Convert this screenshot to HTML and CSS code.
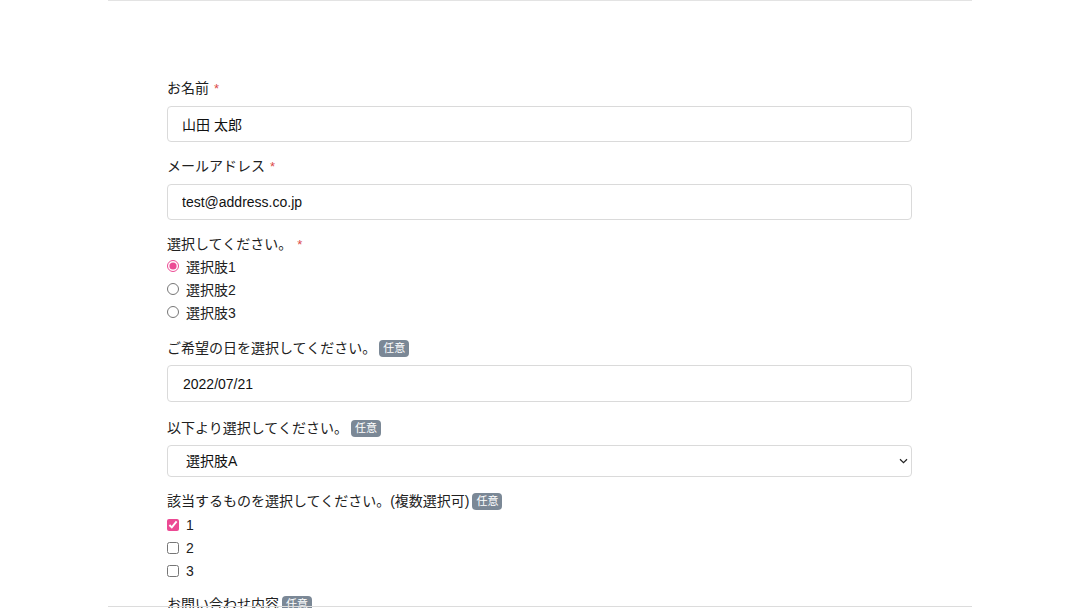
FILE: index.html
```html
<!DOCTYPE html>
<html lang="ja">

<head>
    <meta charset="UTF-8">
    <meta name="viewport" content="width=device-width, initial-scale=1.0">
    <title>お問い合わせ</title>
    <link rel="stylesheet" href="styles.css">
</head>

<body>
    <!-- フォーム本体 -->
    <div class="page">
        <form class="contact-form">
            <div class="field">
                <label class="field-label">お名前<span class="required">*</span></label>
                <input class="text-input" type="text" value="山田 太郎">
            </div>

            <div class="field">
                <label class="field-label">メールアドレス<span class="required">*</span></label>
                <input class="text-input" type="text" value="test@address.co.jp">
            </div>

            <div class="field field-choices field-radio">
                <label class="field-label choice-title">選択してください。<span class="required">*</span></label>
                <label class="choice"><input type="radio" name="q1" checked><span>選択肢1</span></label>
                <label class="choice"><input type="radio" name="q1"><span>選択肢2</span></label>
                <label class="choice"><input type="radio" name="q1"><span>選択肢3</span></label>
            </div>

            <div class="field field-date">
                <label class="field-label">ご希望の日を選択してください。<span class="badge">任意</span></label>
                <input class="text-input date-input" type="text" value="2022/07/21">
            </div>

            <div class="field">
                <label class="field-label select-label">以下より選択してください。<span class="badge">任意</span></label>
                <div class="select-wrap">
                    <select class="select-input">
                        <option>選択肢A</option>
                        <option>選択肢B</option>
                        <option>選択肢C</option>
                    </select>
                    <svg class="select-arrow" width="9" height="6" viewBox="0 0 9 6">
                        <path d="M1 1.2 L4.5 4.6 L8 1.2" fill="none" stroke="#222" stroke-width="1.2"/>
                    </svg>
                </div>
            </div>

            <div class="field field-choices">
                <label class="field-label choice-title">該当するものを選択してください。(複数選択可)<span class="badge">任意</span></label>
                <label class="choice"><input type="checkbox" checked><span>1</span></label>
                <label class="choice"><input type="checkbox"><span>2</span></label>
                <label class="choice"><input type="checkbox"><span>3</span></label>
            </div>

            <div class="field">
                <label class="field-label">お問い合わせ内容<span class="badge">任意</span></label>
                <textarea class="text-input textarea-input"></textarea>
            </div>
        </form>
    </div>

    <!-- 下部の区切り線 -->
    <div class="bottom-line"></div>
</body>

</html>
```

FILE: styles.css
```css
body {
    margin: 0;
    padding: 0;
    background-color: #fff;
    color: #212121;
    font-family: "Liberation Sans", "Noto Sans CJK JP", sans-serif;
    font-size: 14px;
}

.page {
    box-sizing: border-box;
    width: 864px;
    margin: 0 auto;
    padding: 77px 60px 0 59px;
    border-top: 1px solid #e3e3e3;
}

.contact-form {
    display: flex;
    flex-direction: column;
}

.field {
    display: flex;
    flex-direction: column;
    margin-bottom: 14px;
}

.field-label {
    display: flex;
    align-items: center;
    height: 21px;
    line-height: 21px;
    margin-bottom: 7px;
}

.required {
    color: #dc4a4a;
    font-size: 13px;
    margin-left: 5px;
}

.badge {
    display: inline-flex;
    align-items: center;
    height: 17px;
    padding: 0 4px;
    margin-left: 3px;
    border-radius: 4px;
    background-color: #7b8896;
    color: #fff;
    font-size: 11px;
    line-height: 17px;
}

.text-input {
    box-sizing: border-box;
    width: 100%;
    height: 36px;
    padding: 0 14px;
    border: 1px solid #dadada;
    border-radius: 4px;
    font-family: inherit;
    font-size: 14px;
    color: #111;
    background-color: #fff;
}

.field-date {
    margin-bottom: 16px;
}

.field-date .field-label {
    margin-bottom: 6px;
}

.date-input {
    height: 37px;
    padding-left: 15px;
}

.textarea-input {
    height: 120px;
    resize: none;
}

/* ラジオ・チェックボックス */
.field-choices {
    margin-bottom: 12px;
}

.choice-title {
    margin-bottom: 1px;
}

.field-radio {
    margin-bottom: 15px;
}

.field-radio .choice-title {
    margin-bottom: -1px;
}

.choice {
    display: flex;
    align-items: center;
    height: 23px;
}

.choice input {
    width: 12px;
    height: 12px;
    margin: 0 7px 0 0;
    accent-color: #ec4a94;
}

/* セレクト */
.select-label {
    margin-bottom: 6px;
}

.select-wrap {
    position: relative;
}

.select-input {
    box-sizing: border-box;
    width: 100%;
    height: 32px;
    padding: 0 18px;
    border: 1px solid #dadada;
    border-radius: 4px;
    background-color: #fff;
    font-family: inherit;
    font-size: 14px;
    color: #111;
    appearance: none;
}

.select-arrow {
    position: absolute;
    right: 4px;
    top: 13px;
    pointer-events: none;
}

.bottom-line {
    position: fixed;
    left: 0;
    right: 0;
    bottom: 1px;
    width: 864px;
    height: 1px;
    margin: 0 auto;
    background-color: #dcdcdc;
}
```
